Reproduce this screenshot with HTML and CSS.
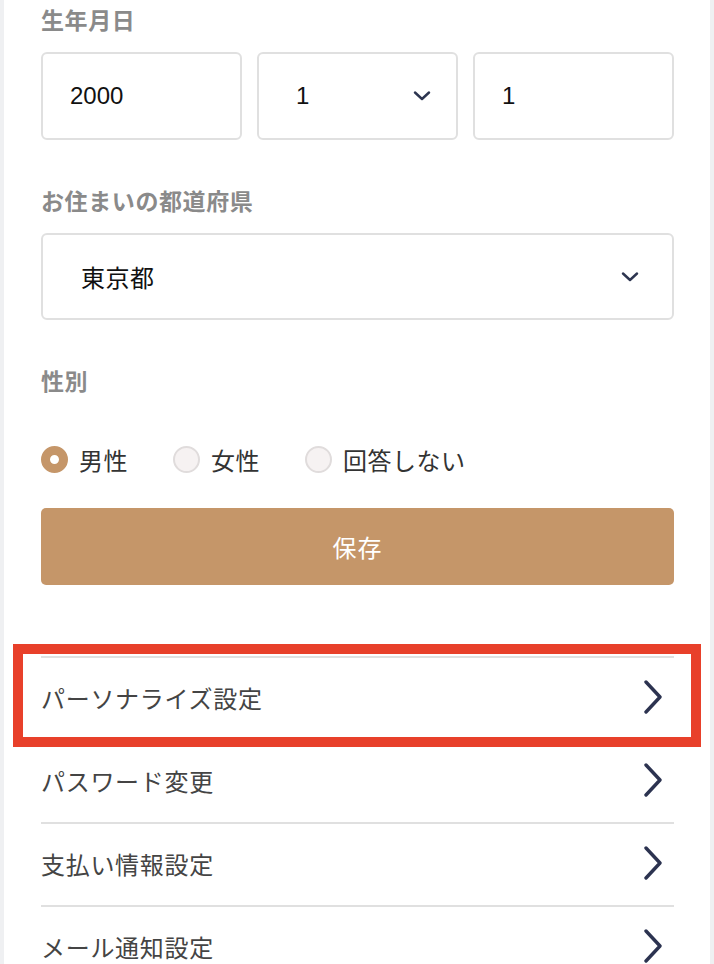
FILE: index.html
```html
<!DOCTYPE html>
<html lang="ja">
<head>
  <meta charset="UTF-8">
  <meta name="viewport" content="width=device-width, initial-scale=1.0">
  <title>アカウント設定</title>
  <link rel="stylesheet" href="styles.css">
</head>
<body>

  <div id="page">
    <div class="field-label">生年月日</div>
    <div class="date-row">
      <div class="box input-box">2000</div>
      <div class="box select-box">
        <span>1</span>
        <svg class="chevron-down" width="18" height="10" viewBox="0 0 18 10"><path d="M2 1.5 L9 8 L16 1.5" fill="none" stroke="#2d3550" stroke-width="2.4" stroke-linecap="round" stroke-linejoin="round"/></svg>
      </div>
      <div class="box input-box">1</div>
    </div>

    <div class="field-label">お住まいの都道府県</div>
    <div class="box select-box pref-select">
      <span>東京都</span>
      <svg class="chevron-down" width="18" height="10" viewBox="0 0 18 10"><path d="M2 1.5 L9 8 L16 1.5" fill="none" stroke="#2d3550" stroke-width="2.4" stroke-linecap="round" stroke-linejoin="round"/></svg>
    </div>

    <div class="field-label">性別</div>
    <div class="radio-row">
      <label class="radio"><span class="dot checked"></span>男性</label>
      <label class="radio"><span class="dot"></span>女性</label>
      <label class="radio"><span class="dot"></span>回答しない</label>
    </div>

    <button id="save-button">保存</button>

    <ul id="menu">
      <li class="menu-item highlighted">
        <span>パーソナライズ設定</span>
        <svg class="chevron-right" width="20" height="34" viewBox="0 0 20 34"><path d="M3 2 L17 17 L3 32" fill="none" stroke="#2c3350" stroke-width="3.4" stroke-linecap="round" stroke-linejoin="round"/></svg>
        <div class="annotation"></div>
      </li>
      <li class="menu-item">
        <span>パスワード変更</span>
        <svg class="chevron-right" width="20" height="34" viewBox="0 0 20 34"><path d="M3 2 L17 17 L3 32" fill="none" stroke="#2c3350" stroke-width="3.4" stroke-linecap="round" stroke-linejoin="round"/></svg>
      </li>
      <li class="menu-item">
        <span>支払い情報設定</span>
        <svg class="chevron-right" width="20" height="34" viewBox="0 0 20 34"><path d="M3 2 L17 17 L3 32" fill="none" stroke="#2c3350" stroke-width="3.4" stroke-linecap="round" stroke-linejoin="round"/></svg>
      </li>
      <li class="menu-item">
        <span>メール通知設定</span>
        <svg class="chevron-right" width="20" height="34" viewBox="0 0 20 34"><path d="M3 2 L17 17 L3 32" fill="none" stroke="#2c3350" stroke-width="3.4" stroke-linecap="round" stroke-linejoin="round"/></svg>
      </li>
    </ul>
  </div>

</body>
</html>
```

FILE: styles.css
```css
html, body {
  height: 100%;
}
body {
  margin: 0;
  background-color: #eff0f2;
  font-family: "Liberation Sans", "Noto Sans CJK JP", sans-serif;
  overflow: hidden;
}
#page {
  background-color: #fff;
  margin: 0 4px;
  min-height: 100%;
  padding: 5px 36px 0 37px;
  box-sizing: border-box;
}
.field-label {
  font-size: 23px;
  line-height: 32px;
  font-weight: bold;
  color: #8a8a8a;
  letter-spacing: 0.6px;
}
.date-row {
  display: grid;
  grid-template-columns: 1fr 1fr 1fr;
  gap: 15px;
  margin: 15px 0 46px;
}
.box {
  height: 88px;
  border: 2px solid #e0e0e0;
  border-radius: 6px;
  box-sizing: border-box;
  display: flex;
  align-items: center;
  font-size: 24px;
  color: #111;
}
.input-box {
  padding-left: 27px;
}
.select-box {
  justify-content: space-between;
  padding: 0 25px 0 37px;
}
.pref-select {
  height: 87px;
  margin: 15px 0 46px;
  padding-right: 33px;
  padding-left: 38px;
  letter-spacing: 0.5px;
}
.radio-row {
  display: flex;
  align-items: center;
  gap: 45px;
  height: 32px;
  margin: 45px 0 33px;
}
.radio {
  display: flex;
  align-items: center;
  gap: 11px;
  font-size: 24px;
  color: #333;
  letter-spacing: 0.5px;
}
.dot {
  width: 27px;
  height: 27px;
  border-radius: 50%;
  box-sizing: border-box;
  background-color: #f6f2f2;
  border: 2px solid #e0dcdc;
}
.dot.checked {
  background-color: #fff;
  border: 9px solid #c59669;
}
#save-button {
  display: block;
  width: 100%;
  height: 77px;
  border: none;
  border-radius: 5px;
  background-color: #c59669;
  color: #fff;
  font-family: inherit;
  font-size: 24px;
  letter-spacing: 1px;
}
#menu {
  list-style: none;
  margin: 71px 0 0;
  padding: 0;
}
.menu-item {
  position: relative;
  display: flex;
  align-items: center;
  justify-content: space-between;
  height: 83px;
  border-top: 2px solid #e0e0e0;
  box-sizing: border-box;
  padding: 0 11px 3px 0;
  font-size: 24px;
  color: #444;
  letter-spacing: 0.7px;
}
.annotation {
  position: absolute;
  z-index: 1;
  top: -14px;
  left: -28px;
  right: -27px;
  bottom: -8px;
  border: 10px solid #e8402a;
  pointer-events: none;
}
```
